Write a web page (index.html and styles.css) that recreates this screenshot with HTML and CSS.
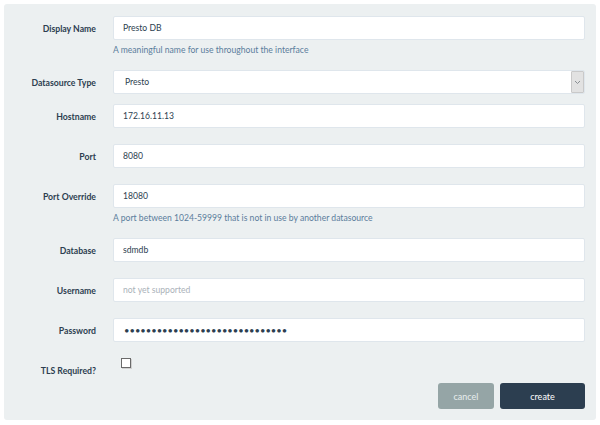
FILE: index.html
```html
<!DOCTYPE html>
<html lang="en">
<head>
    <meta charset="UTF-8">
    <meta name="viewport" content="width=device-width, initial-scale=1.0">
    <title>New Datasource</title>
    <link rel="stylesheet" href="styles.css">
</head>
<body>
    <form class="panel">
        <div class="row">
            <label class="label" for="displayName">Display Name</label>
            <div class="field">
                <input type="text" id="displayName" value="Presto DB">
                <p class="help">A meaningful name for use throughout the interface</p>
            </div>
        </div>
        <div class="row row-select">
            <label class="label" for="dsType">Datasource Type</label>
            <div class="field select-wrap">
                <select id="dsType">
                    <option>Presto</option>
                </select>
                <span class="select-arrow">
                    <svg width="7" height="5" viewBox="0 0 7 5"><path d="M1 1l2.5 2.5L6 1" fill="none" stroke="#8a8f93" stroke-width="1"/></svg>
                </span>
            </div>
        </div>
        <div class="row">
            <label class="label" for="hostname">Hostname</label>
            <div class="field"><input type="text" id="hostname" value="172.16.11.13"></div>
        </div>
        <div class="row">
            <label class="label" for="port">Port</label>
            <div class="field"><input type="text" id="port" value="8080"></div>
        </div>
        <div class="row">
            <label class="label" for="portOverride">Port Override</label>
            <div class="field">
                <input type="text" id="portOverride" value="18080">
                <p class="help">A port between 1024-59999 that is not in use by another datasource</p>
            </div>
        </div>
        <div class="row">
            <label class="label" for="database">Database</label>
            <div class="field"><input type="text" id="database" value="sdmdb"></div>
        </div>
        <div class="row">
            <label class="label" for="username">Username</label>
            <div class="field"><input type="text" id="username" placeholder="not yet supported"></div>
        </div>
        <div class="row">
            <label class="label" for="password">Password</label>
            <div class="field"><input type="password" id="password" value="secretsecretsecretsecretsecret"></div>
        </div>
        <div class="row">
            <label class="label" for="tls">TLS Required?</label>
            <div class="field"><input type="checkbox" id="tls" class="check"></div>
        </div>
        <div class="actions">
            <button type="button" class="btn btn-cancel">cancel</button>
            <button type="button" class="btn btn-create">create</button>
        </div>
    </form>
</body>
</html>
```

FILE: styles.css
```css
body {
    margin: 4px;
    font-family: Lato, 'Open Sans', sans-serif;
    background-color: #ffffff;
    color: #2c3e50;
}
.panel {
    background-color: #ecf0f1;
    border-radius: 3px;
    padding: 12px 11px 11px 12px;
    margin: 0;
}
.row {
    display: grid;
    grid-template-columns: 80px 1fr;
    column-gap: 17px;
    margin-bottom: 16px;
}
.row-select {
    margin-bottom: 10px;
}
.label {
    text-align: right;
    font-size: 8.7px;
    font-weight: bold;
    line-height: 13px;
    padding-top: 6px;
    white-space: nowrap;
    color: #2c3e50;
}
.field {
    min-width: 0;
}
input[type="text"],
input[type="password"],
select {
    display: block;
    box-sizing: border-box;
    width: 100%;
    height: 24px;
    margin: 0;
    padding: 0 9px;
    border: 1px solid #dfe6ec;
    border-radius: 2px;
    background-color: #ffffff;
    font-family: Lato, 'Open Sans', sans-serif;
    font-size: 8.6px;
    color: #2c3e50;
    outline: none;
}
input[type="password"] {
    font-size: 9.4px;
    padding-left: 10px;
}
input::placeholder {
    color: #aab2b9;
}
select {
    -webkit-appearance: none;
    appearance: none;
    padding-left: 11px;
}
.select-wrap {
    position: relative;
}
.select-arrow {
    position: absolute;
    right: 1px;
    top: 1px;
    bottom: 1px;
    width: 11px;
    display: flex;
    align-items: center;
    justify-content: center;
    background-color: #e2e2e2;
    border: 1px solid #c9c9c9;
    border-radius: 1px;
    pointer-events: none;
}
.help {
    margin: 0 0 -3px;
    padding-top: 3px;
    font-size: 8.6px;
    line-height: 14px;
    color: #5b7d9c;
}
.check {
    -webkit-appearance: none;
    appearance: none;
    display: block;
    box-sizing: border-box;
    width: 10px;
    height: 10px;
    margin: 0 0 0 8px;
    border: 1px solid #6a6a6a;
    border-radius: 0;
    background-color: #ffffff;
    box-shadow: 1px 1px 0 #d0d0d0;
}
.actions {
    display: flex;
    justify-content: flex-end;
    gap: 6px;
    margin-top: -10px;
}
.btn {
    height: 26px;
    border: none;
    border-radius: 3px;
    color: #ffffff;
    font-family: Lato, 'Open Sans', sans-serif;
    font-size: 9px;
    cursor: pointer;
}
.btn-cancel {
    width: 56px;
    background-color: #95a5a6;
    color: #e8eded;
}
.btn-create {
    width: 85px;
    background-color: #2c3e50;
}
```
